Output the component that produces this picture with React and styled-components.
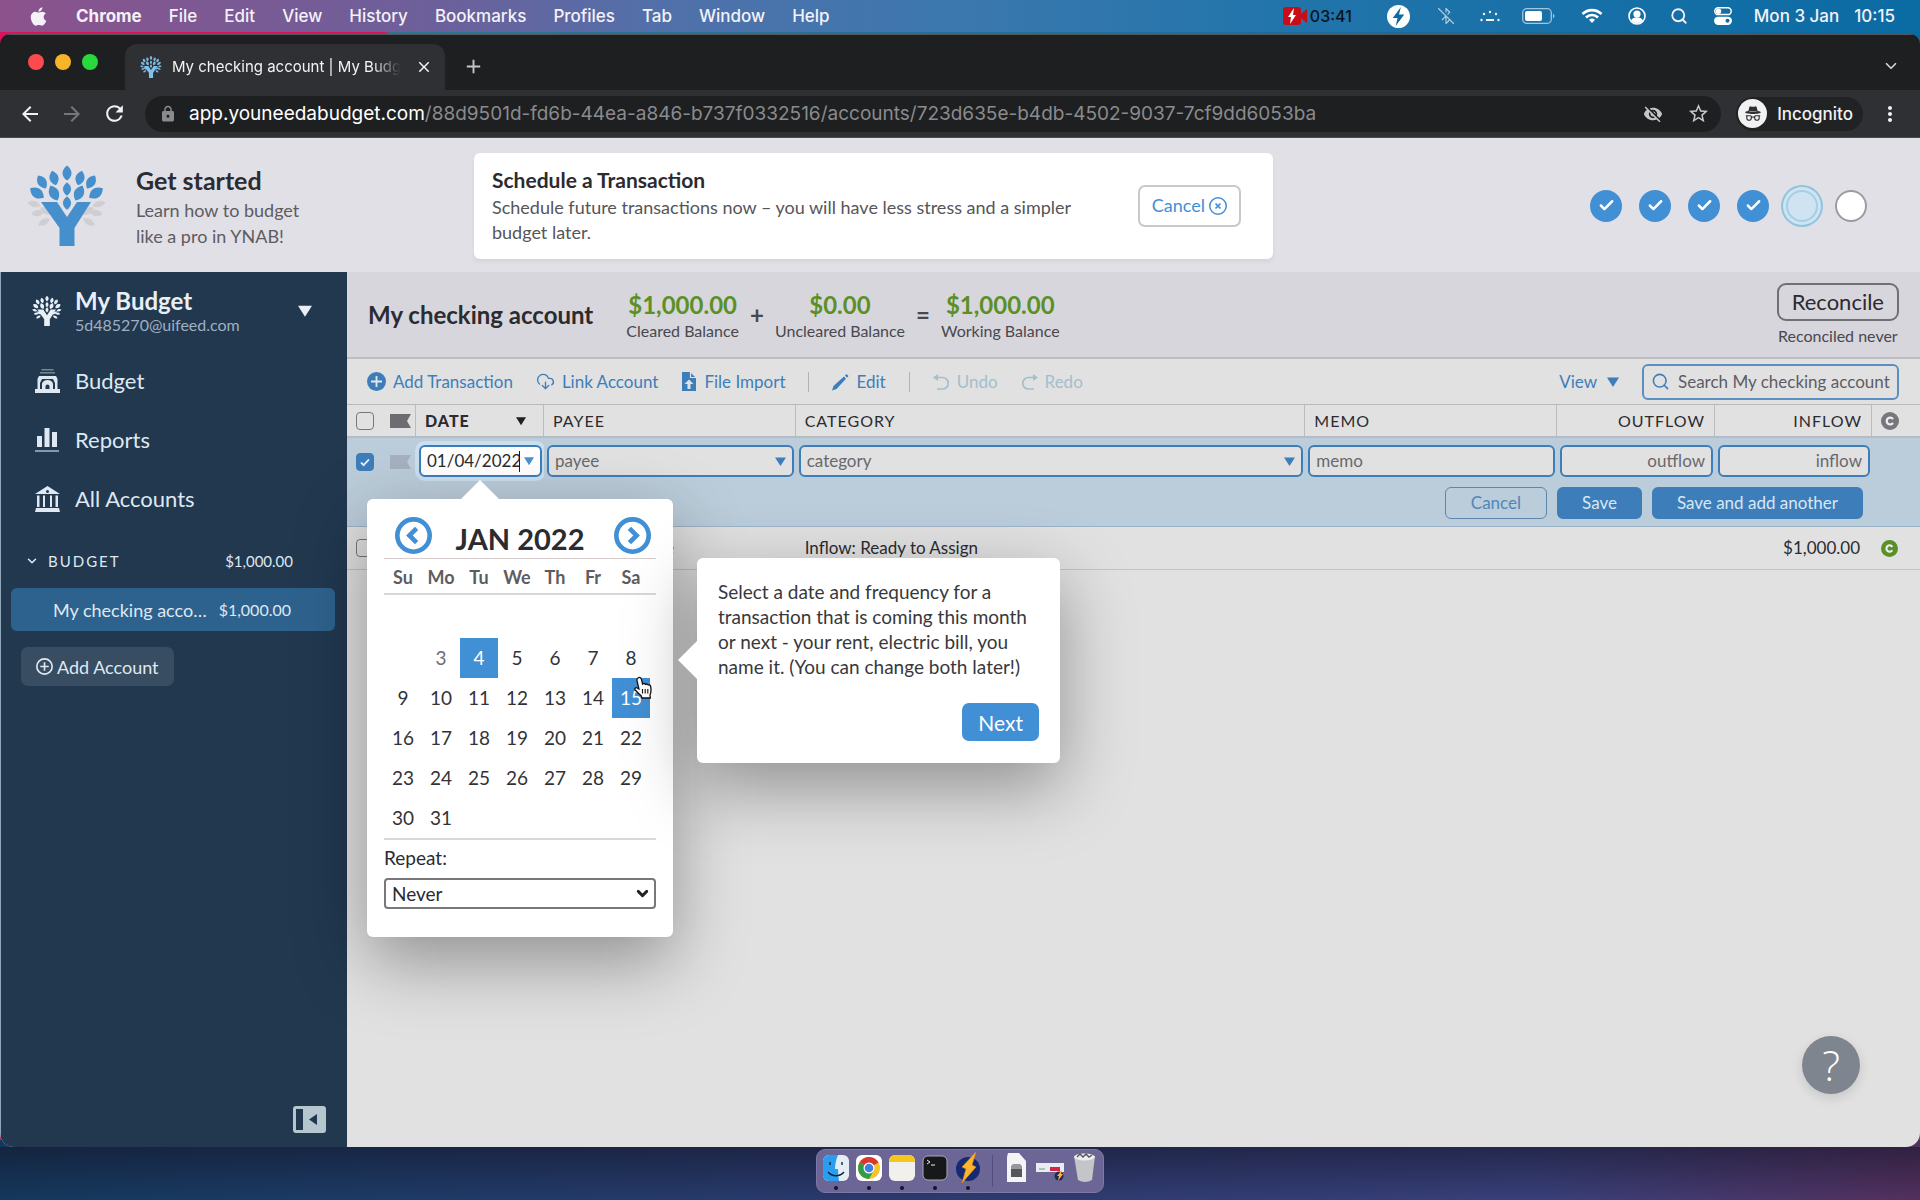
import React from "react";
import styled, { createGlobalStyle, css } from "styled-components";
import { FaApple } from "react-icons/fa";
import { BsIncognito } from "react-icons/bs";
import {
  MdArrowBack,
  MdArrowForward,
  MdRefresh,
  MdLock,
  MdVisibilityOff,
  MdStarBorder,
  MdMoreVert,
  MdClose,
  MdAdd,
} from "react-icons/md";
import { BluetoothOff, ChevronDown, Search, Check, CloudDownload } from "lucide-react";

const blue = "#3d7eba";
const bright = "#418fd4";
const ui = `Inter, "Liberation Sans", sans-serif`;
const lato = `Lato, "Liberation Sans", sans-serif`;

const GlobalStyle = createGlobalStyle`
  *, *::before, *::after { box-sizing: border-box; }
  body { margin: 0; font-family: ${lato}; color: #2b2b30; }
  button, input, select { font: inherit; color: inherit; margin: 0; }
  button { background: none; border: 0; padding: 0; cursor: pointer; }
  a { color: inherit; text-decoration: none; }
  h1, h2, p { margin: 0; }
  svg { display: block; flex: none; }
`;

const Desktop = styled.div`
  min-height: 100vh;
  display: flex;
  flex-direction: column;
  background:
    linear-gradient(rgba(20, 20, 40, 0.55), rgba(20, 20, 40, 0) 100%) bottom / 100% 53px no-repeat,
    linear-gradient(90deg, #14385c 0%, #1c3b66 18%, #2b3a6e 45%, #38407a 80%, #54305e 100%) bottom / 100% 60px no-repeat,
    linear-gradient(90deg, #d8145c 0 385px, #2f7394 390px, #0a6aa2 100%);
`;

/* ---------- system menu bar ---------- */

const MenuBar = styled.header`
  height: 32px;
  display: flex;
  align-items: center;
  justify-content: space-between;
  padding: 0 25px 0 28px;
  font: 500 17px/20px ${ui};
  color: #f4f2f8;
  background: linear-gradient(90deg, #8c528c 0%, #6a619c 24%, #5270aa 34%, #3b78ae 50%, #2275ab 66%, #0b6ba3 100%);
`;

const Menus = styled.nav`
  display: flex;
  align-items: center;
  gap: 27px;
`;

const MenuItem = styled.button`
  font-weight: ${(p) => (p.$strong ? 700 : 500)};
`;

const Tray = styled.div`
  display: flex;
  align-items: center;
`;

const TrayItem = styled.span`
  width: ${(p) => p.$w}px;
  display: flex;
  align-items: center;
  justify-content: center;
`;

const Recording = styled.span`
  display: flex;
  align-items: center;
  gap: 3px;
  width: 93px;
  font-size: 16px;
  color: #0a1420;
`;

const Clock = styled.time`
  display: flex;
  gap: 15px;
  margin-left: 8px;
  white-space: nowrap;
`;

/* ---------- browser frame ---------- */

const Window = styled.div`
  flex: 1;
  display: flex;
  flex-direction: column;
  margin-top: 2px;
  border-radius: 10px 10px 14px 14px;
  overflow: hidden;
  background: #1e1f21;
`;

const TabStrip = styled.div`
  height: 56px;
  display: flex;
  align-items: center;
  padding: 8px 20px 0 28px;
  box-shadow: inset 0 1px #55585b;
  color: #d5d6d8;
`;

const Lights = styled.div`
  display: flex;
  gap: 11px;
  width: 97px;
  padding-bottom: 8px;
`;

const Light = styled.span`
  width: 16px;
  height: 16px;
  border-radius: 50%;
  background: ${(p) => p.$color};
`;

const Tab = styled.div`
  width: 320px;
  height: 46px;
  align-self: flex-end;
  display: flex;
  align-items: center;
  gap: 10px;
  padding: 0 12px 0 15px;
  border-radius: 12px 12px 0 0;
  background: #2f3034;
  color: #f3f3f4;
  font: 400 15px/20px ${ui};
`;

const TabTitle = styled.span`
  flex: 1;
  min-width: 0;
  overflow: hidden;
  white-space: nowrap;
  mask-image: linear-gradient(90deg, #000 86%, transparent 98%);
`;

const Spacer = styled.span`
  flex: 1;
`;

const NewTab = styled.button`
  margin-left: 17px;
  color: #c5c6c8;
`;

const NavBar = styled.div`
  height: 48px;
  display: flex;
  align-items: center;
  gap: 15px;
  padding: 0 18px;
  background: #2f3034;
  border-bottom: 1px solid #4a4b4e;
  color: #f1f1f2;
  font: 400 19px/24px ${ui};
`;

const NavGroup = styled.div`
  display: flex;
  gap: 18px;
  padding-right: 3px;
`;

const NavButton = styled.button`
  color: ${(p) => (p.$dim ? "#76777a" : "#f1f1f2")};
`;

const Omnibox = styled.div`
  flex: 1;
  min-width: 0;
  height: 36px;
  display: flex;
  align-items: center;
  gap: 12px;
  padding: 0 11px 0 14px;
  border-radius: 18px;
  background: #1e1f21;
  color: #8a8b8e;
`;

const Url = styled.span`
  flex: 1;
  min-width: 0;
  overflow: hidden;
  white-space: nowrap;
  b { color: #fff; font-weight: 400; }
`;

const Incognito = styled.span`
  height: 34px;
  display: flex;
  align-items: center;
  gap: 10px;
  padding: 0 10px 0 2px;
  border-radius: 17px;
  background: #212224;
  font: 500 17px/20px ${ui};
`;

const Badge = styled.span`
  width: 29px;
  height: 29px;
  display: grid;
  place-items: center;
  border-radius: 50%;
  background: #f1f1f2;
  color: #2f3034;
`;

/* ---------- onboarding banner ---------- */

const Banner = styled.section`
  display: flex;
  align-items: center;
  height: 134px;
  padding: 1px 53px 0 27px;
  background: #e1e0e6;
`;

const Intro = styled.div`
  display: flex;
  align-items: center;
  gap: 29px;
  width: 447px;
  font-size: 18px;
  line-height: 26px;
  color: #5c5c61;
`;

const Title = styled.h1`
  font-size: ${(p) => p.$size}px;
  line-height: ${(p) => p.$line}px;
  font-weight: 700;
  color: #2b2b30;
  white-space: nowrap;
`;

const Step = styled.div`
  flex: 0 1 799px;
  display: flex;
  justify-content: space-between;
  align-items: center;
  height: 106px;
  padding: 0 32px 0 18px;
  border-radius: 6px;
  background: #fff;
  box-shadow: 0 3px 4px rgba(0, 0, 0, 0.06);
  font-size: 18px;
  line-height: 25px;
  color: #55555a;
`;

const StepText = styled.div`
  max-width: 590px;
  padding-bottom: 2px;
`;

const CancelStep = styled.button`
  display: flex;
  align-items: center;
  gap: 4px;
  height: 42px;
  padding: 0 12px;
  border: 2px solid #c9c9cd;
  border-radius: 7px;
  color: ${bright};
`;

const Progress = styled.ol`
  display: flex;
  align-items: center;
  gap: 17px;
  margin: 0 0 0 auto;
  padding: 0;
  list-style: none;
`;

const Dot = styled.li`
  width: 32px;
  height: 32px;
  display: grid;
  place-items: center;
  border-radius: 50%;
  color: #fff;
  background: ${(p) => (p.$state === "done" ? bright : p.$state === "now" ? "#cfe3f3" : "#fff")};
  ${(p) => p.$state === "todo" && css`border: 2px solid #9b9ba2;`}
  ${(p) =>
    p.$state === "now" &&
    css`
      border: 2px solid #a5cfe2;
      box-shadow: 0 0 0 3px #cfe3f3, 0 0 0 5px #8fc4dd;
    `}
`;

/* ---------- sidebar ---------- */

const Body = styled.div`
  flex: 1;
  display: flex;
  background: #e1e1e1;
`;

const Sidebar = styled.aside`
  width: 347px;
  flex: none;
  position: relative;
  z-index: 2;
  display: flex;
  flex-direction: column;
  background: #21384f;
  border-left: 1px solid #8fa5ba;
  color: #dfe8f1;
`;

const BudgetPicker = styled.button`
  display: flex;
  align-items: center;
  text-align: left;
  padding: 15px 35px 14px 31px;
`;

const PickerText = styled.span`
  flex: 1;
  padding-left: 13px;
  font-size: 16px;
  line-height: 20px;
  color: #9fb0c2;
  strong { display: block; font-size: 24px; line-height: 28px; color: #e8eff6; }
`;

const SideNav = styled.nav`
  display: flex;
  flex-direction: column;
  gap: 1px;
  padding: 3px 0 0 32px;
`;

const SideLink = styled.a`
  display: flex;
  align-items: center;
  gap: 14px;
  height: 58px;
  font-size: 22px;
  line-height: 28px;
`;

const IconSlot = styled.span`
  width: 28px;
  display: grid;
  place-items: center;
`;

const Group = styled.button`
  display: flex;
  align-items: center;
  gap: 9px;
  height: 20px;
  margin: 23px 54px 0 24px;
  font-size: 15px;
  line-height: 20px;
`;

const GroupName = styled.span`
  letter-spacing: 2px;
`;

const AccountLink = styled.a`
  display: flex;
  align-items: center;
  justify-content: space-between;
  height: 43px;
  margin: 17px 12px 16px 10px;
  padding: 0 44px 0 42px;
  border-radius: 6px;
  background: #2e628e;
  font-size: 18px;
  line-height: 24px;
  small { font-size: 16px; }
`;

const AccountName = styled.span`
  width: 160px;
  overflow: hidden;
  white-space: nowrap;
  text-overflow: ellipsis;
`;

const AddAccount = styled.button`
  display: flex;
  align-items: center;
  align-self: flex-start;
  gap: 4px;
  height: 39px;
  margin-left: 20px;
  padding: 0 15px;
  border-radius: 7px;
  background: #384c62;
  font-size: 18px;
`;

const Collapse = styled.button`
  margin: auto 21px 14px auto;
`;

/* ---------- account area ---------- */

const Main = styled.main`
  flex: 1;
  min-width: 0;
  position: relative;
`;

const AccountHeader = styled.header`
  display: flex;
  align-items: center;
  height: 87px;
  padding: 0 21px;
  background: #d7d6dc;
  border-bottom: 2px solid #bdbdc2;
`;

const Balances = styled.div`
  display: flex;
  align-items: center;
  gap: 10px;
  margin-left: 33px;
  font-size: 16px;
  line-height: 20px;
  color: #48484e;
  text-align: center;
`;

const Balance = styled.div`
  white-space: nowrap;
  strong { display: block; font-size: 24px; line-height: 32px; color: #5b9027; }
`;

const Operator = styled.span`
  width: 16px;
  font-size: 24px;
  font-weight: 700;
`;

const ReconcileBox = styled.div`
  margin-left: auto;
  display: flex;
  flex-direction: column;
  align-items: center;
  gap: 4px;
  font-size: 16px;
  line-height: 22px;
  color: #48484e;
`;

const Reconcile = styled.button`
  height: 38px;
  padding: 0 13px;
  border: 2px solid #6f6f76;
  border-radius: 9px;
  font-size: 22px;
  color: #2b2b30;
`;

const Toolbar = styled.div`
  display: flex;
  align-items: center;
  height: 45px;
  padding: 0 21px 0 20px;
  gap: 23px;
  font-size: 17px;
  line-height: 24px;
  color: ${blue};
`;

const Tool = styled.button`
  display: flex;
  align-items: center;
  gap: ${(p) => (p.$menu ? 10 : 7)}px;
  white-space: nowrap;
  ${(p) => p.disabled && css`color: #a3bfcc;`}
`;

const Rule = styled.span`
  width: 1px;
  height: 20px;
  background: #b4b4b8;
`;

const SearchBox = styled.label`
  display: flex;
  align-items: center;
  gap: 8px;
  width: 257px;
  height: 36px;
  padding: 0 7px;
  border: 2px solid #5a8fc0;
  border-radius: 6px;
`;

const SearchInput = styled.input`
  flex: 1;
  min-width: 0;
  padding: 0;
  border: 0;
  outline: 0;
  background: none;
  &::placeholder { color: #5d5d62; opacity: 1; }
`;

const Register = styled.table`
  width: 100%;
  table-layout: fixed;
  border-collapse: separate;
  border-spacing: 0;
  font-size: 17px;
  line-height: 22px;
`;

const Col = styled.col`
  width: ${(p) => p.$w};
`;

const Th = styled.th`
  height: 34px;
  padding: 0 9px;
  border-top: 1px solid #b9b9bd;
  border-right: ${(p) => (p.$open ? "0" : "1px")} solid #bcbcc0;
  border-bottom: 2px solid #b5bcc4;
  font-size: 16px;
  font-weight: ${(p) => (p.$strong ? 900 : 400)};
  text-align: ${(p) => p.$align || "left"};
  letter-spacing: 1px;
  color: #2b2b30;
`;

const HeadInner = styled.div`
  display: flex;
  align-items: center;
  justify-content: space-between;
  padding-right: 8px;
`;

const EditCell = styled.td`
  position: relative;
  height: 45px;
  padding: 7px 2px 6px 3px;
  background: #bbccda;
  vertical-align: top;
`;

const CheckCell = styled.td`
  padding: 2px 9px 0;
  background: #bbccda;
  vertical-align: middle;
`;

const ActionCell = styled.td`
  height: 44px;
  padding: 0;
  background: #bbccda;
  border-bottom: 1px solid #9cb4c8;
`;

const Actions = styled.div`
  display: flex;
  justify-content: flex-end;
  align-items: flex-start;
  gap: 10px;
  padding: 0 57px 3px 0;
`;

const Action = styled.button`
  height: 32px;
  padding: 0 23px;
  border-radius: 6px;
  border: 2px solid ${blue};
  background: ${blue};
  color: #d9e7f4;
  ${(p) =>
    p.$ghost &&
    css`
      padding: 0 25px;
      border: 1px solid #5b86ae;
      background: none;
      color: #5087bb;
    `}
`;

const Cell = styled.td`
  height: 43px;
  padding: 0 12px 0 9px;
  border-bottom: 1px solid #c3c3c6;
  text-align: ${(p) => p.$align || "left"};
`;

const Tick = styled.input`
  appearance: none;
  display: block;
  width: 18px;
  height: 18px;
  border: 1px solid #77777c;
  border-radius: 4px;
  &:checked {
    border-color: ${blue};
    background: ${blue} url("data:image/svg+xml,%3Csvg xmlns='http://www.w3.org/2000/svg' viewBox='0 0 16 16'%3E%3Cpath d='M4 8.5l2.6 2.6L12 5.4' fill='none' stroke='%23e3eef8' stroke-width='1.8'/%3E%3C/svg%3E") center / 16px;
  }
`;

const Field = styled.label`
  display: flex;
  align-items: center;
  height: 32px;
  padding: 0 6px;
  border: 2px solid ${blue};
  border-radius: 6px;
  background: ${(p) => (p.$active ? "#fff" : "#e1e1e1")};
  box-shadow: ${(p) => (p.$active ? "0 0 0 4px #cadff0" : "none")};
`;

const FieldInput = styled.input`
  flex: 1;
  min-width: 0;
  width: 100%;
  padding: 0;
  border: 0;
  outline: 0;
  background: none;
  text-align: ${(p) => p.$align || "left"};
  &::placeholder { color: #68686d; opacity: 1; }
`;

const Caret = styled.span`
  width: 1px;
  height: 21px;
  margin-right: 4px;
  background: #1b1b1f;
`;

/* ---------- date picker ---------- */

const popShadow = "0 24px 70px rgba(0, 0, 0, 0.36)";

const Picker = styled.div`
  position: absolute;
  z-index: 3;
  top: 61px;
  left: -49px;
  width: 306px;
  padding: 18px 17px 28px;
  border-radius: 6px;
  background: #fff;
  box-shadow: ${popShadow};
  font-size: 19px;
  &::before {
    content: "";
    position: absolute;
    left: 94px;
    top: -19px;
    border: 19px solid transparent;
    border-top: 0;
    border-bottom-color: #fff;
  }
`;

const PickerHead = styled.div`
  display: flex;
  align-items: flex-end;
  justify-content: space-between;
  height: 42px;
  padding: 0 5px 4px 11px;
  border-bottom: 1px solid #d6cccc;
`;

const MonthName = styled.span`
  padding-right: 6px;
  font-size: 29px;
  line-height: 30px;
  font-weight: 700;
`;

const Weekdays = styled.div`
  display: grid;
  grid-template-columns: repeat(7, 38px);
  height: 36px;
  padding-top: 2px;
  align-items: center;
  justify-items: center;
  border-bottom: 2px solid #d8d8d8;
  font-size: 18px;
  font-weight: 700;
  color: #5d5d61;
`;

const Days = styled.div`
  display: grid;
  grid-template-columns: repeat(7, 38px);
  grid-auto-rows: 40px;
  padding: 3px 0 0;
  border-bottom: 2px solid #d8d8d8;
`;

const Day = styled.button`
  position: relative;
  color: ${(p) => (p.$picked ? "#fff" : p.$past ? "#6d6d71" : "#333337")};
  background: ${(p) => (p.$picked ? bright : "none")};
`;

const Hand = styled.svg`
  position: absolute;
  z-index: 1;
  top: -2px;
  left: 22px;
`;

const RepeatLabel = styled.label`
  display: block;
  padding-top: 6px;
  line-height: 24px;
`;

const RepeatBox = styled.span`
  display: grid;
  align-items: center;
  margin-top: 8px;
  > * { grid-area: 1 / 1; }
  > svg { justify-self: end; margin-right: 5px; pointer-events: none; }
`;

const RepeatSelect = styled.select`
  appearance: none;
  width: 100%;
  height: 31px;
  padding: 0 6px;
  border: 2px solid #77777c;
  border-radius: 4px;
  background: #fff;
`;

const Tip = styled.div`
  position: absolute;
  z-index: 4;
  top: 59px;
  left: 330px;
  width: 363px;
  padding: 21px 21px 22px;
  border-radius: 6px;
  background: #fff;
  box-shadow: ${popShadow};
  line-height: 25px;
  color: #38383c;
  &::before {
    content: "";
    position: absolute;
    left: -19px;
    top: 83px;
    border: 19px solid transparent;
    border-left: 0;
    border-right-color: #fff;
  }
`;

const Next = styled.button`
  display: block;
  height: 38px;
  margin: 24px 0 0 auto;
  padding: 0 16px;
  border-radius: 7px;
  background: ${bright};
  color: #fff;
  font-size: 21px;
`;

const Help = styled.button`
  position: absolute;
  right: 60px;
  bottom: 53px;
  width: 58px;
  height: 58px;
  border-radius: 50%;
  background: #7f858f;
  color: #fff;
  font: 400 42px/58px "Open Sans", ${lato};
  font-weight: 300;
  box-shadow: 0 4px 12px rgba(0, 0, 0, 0.12);
`;

/* ---------- dock ---------- */

const DockArea = styled.footer`
  height: 53px;
  display: flex;
  justify-content: center;
  align-items: flex-start;
  padding-top: 2px;
`;

const Dock = styled.div`
  height: 44px;
  display: flex;
  align-items: flex-start;
  gap: 7px;
  padding: 5px 6px;
  border-radius: 9px;
  background: #6b6695;
  border: 1px solid #7d78a4;
`;

const DockItem = styled.button`
  display: flex;
  flex-direction: column;
  align-items: center;
  gap: 5px;
  &::after {
    content: "";
    width: 4px;
    height: 4px;
    border-radius: 50%;
    background: ${(p) => (p.$running ? "#14142a" : "transparent")};
  }
`;

const DockRule = styled.span`
  width: 1px;
  height: 32px;
  margin: 0 3px 0 4px;
  background: #524e7c;
`;

/* ---------- drawings ---------- */

const leaves = [
  [40, 8, 0, 1], [27, 13, -15, 1], [53, 13, 15, 1], [15, 17, -32, 1], [64, 17, 32, 1],
  [10, 28, -55, 1.1], [69, 28, 55, 1.1], [27, 28, -25, 1.1], [52, 28, 25, 1.1], [40, 24, 0, 0.9], [40, 38, 0, 0.9],
];
const lowLeaves = [
  [7, 39, -75], [72, 39, 75], [11, 48, -100], [69, 48, 100], [19, 46, -60], [61, 46, 60], [17, 57, -120], [62, 57, 120],
];

function Tree({ width, height, color, low, trunk }) {
  const leaf = "M0-8C5-3 5 3 0 8C-5 3-5-3 0-8Z";
  return (
    <svg width={width} height={height} viewBox="0 0 80 82" aria-hidden="true">
      {leaves.map(([x, y, r, s]) => (
        <path key={`${x}-${y}`} d={leaf} fill={color} transform={`translate(${x} ${y}) rotate(${r}) scale(${s * 1.2} ${s * 0.95})`} />
      ))}
      {lowLeaves.map(([x, y, r]) => (
        <path key={`${x}-${y}`} d={leaf} fill={low} transform={`translate(${x} ${y}) rotate(${r}) scale(0.85)`} />
      ))}
      <path d="M14 37h16l10 15 10-15h14L47.500 63v18h-15V63Z" fill={trunk} />
    </svg>
  );
}

const Triangle = ({ size = 12, color = blue }) => (
  <svg width={size} height={size} viewBox="0 0 12 12" aria-hidden="true">
    <path d="M0 1.500h12L6 11Z" fill={color} />
  </svg>
);

const Flag = ({ color }) => (
  <svg width="21" height="14" viewBox="0 0 21 14" aria-hidden="true">
    <path d="M0 0h21l-4 7 4 7H0Z" fill={color} />
  </svg>
);

const Cleared = ({ size, color }) => (
  <svg width={size} height={size} viewBox="0 0 18 18" role="img" aria-label="Cleared">
    <circle cx="9" cy="9" r="9" fill={color} />
    <path d="M12 7.200A3.400 3.400 0 1 0 12 10.800" fill="none" stroke="#e9eef2" strokeWidth="2.300" />
  </svg>
);

const BudgetIcon = () => (
  <svg width="25" height="25" viewBox="0 0 25 25" fill="currentColor">
    <path d="M6.500 0h12v1.500h-12zM5 3h15v1.600H5z" opacity=".45" />
    <path d="M4 7h17l1.500 3v10h-20V10Z" />
    <path d="M5 20v-6l2-4h11l2 4v6Z" fill="#21384f" />
    <path d="M7 20v-5a5.500 4 0 0 1 11 0v5Z" />
    <path d="M10.500 20v-2.500a2 2 0 0 1 4 0V20Z" fill="#21384f" />
    <path d="M0 20h25v4H0Z" />
  </svg>
);

const ReportsIcon = () => (
  <svg width="25" height="26" viewBox="0 0 25 26" fill="currentColor">
    <path d="M2 9h5v11H2zM9.500 1h5v19h-5zM17 5h5v15h-5z" />
    <path d="M0 23h24v2H0Z" opacity=".55" />
  </svg>
);

const BankIcon = () => (
  <svg width="25" height="26" viewBox="0 0 25 26" fill="currentColor">
    <path d="M12.500 0 25 8H0Z" />
    <circle cx="12.500" cy="5.500" r="1.500" fill="#21384f" />
    <path d="M2 9.500h2.500V21H2zM8 9.500h2V21H8zM15 9.500h2V21h-2zM20.500 9.500H23V21h-2.500zM1 22h23l1 4H0Z" />
  </svg>
);

const PlusDisc = () => (
  <svg width="19" height="19" viewBox="0 0 19 19">
    <circle cx="9.500" cy="9.500" r="9.500" fill={blue} />
    <path d="M9.500 4v11M4 9.500h11" stroke="#e1e8ee" strokeWidth="1.800" />
  </svg>
);

const FileIcon = () => (
  <svg width="16" height="20" viewBox="0 0 16 20">
    <path d="M1 0h8l6 6v13H1Z" fill={blue} />
    <path d="M9.500 0v5.500H15" fill="none" stroke="#e1e1e1" strokeWidth="1.200" />
    <path d="M8 7.500 12.500 12H9.500v5h-3v-5h-3Z" fill="#e1e1e1" />
  </svg>
);

const PencilIcon = () => (
  <svg width="17" height="18" viewBox="0 0 17 18" fill={blue}>
    <path d="M12 3.500 14 5.800 4.500 16 0 17.500 1.500 13Z" />
    <path d="M13 2.500 14.500 1l2 2L15 4.700Z" />
  </svg>
);

const TurnIcon = ({ flip }) => (
  <svg width="17" height="18" viewBox="0 0 17 18" fill="none" stroke="currentColor" strokeWidth="1.700">
    <g transform={flip ? "translate(17 0) scale(-1 1)" : undefined}>
      <path d="M2 4.500h7.500a5.500 5.500 0 0 1 0 11.500H4" />
      <path d="M0 4.500 5 1v7Z" fill="currentColor" stroke="none" />
    </g>
  </svg>
);

const RingIcon = ({ size, stroke, d, color, w }) => (
  <svg width={size} height={size} viewBox="0 0 36 36" fill="none" stroke={color} strokeWidth={stroke}>
    <circle cx="18" cy="18" r={18 - stroke / 2} />
    <path d={d} strokeWidth={w || stroke} />
  </svg>
);

const HandPointer = () => (
  <Hand width="18" height="24" viewBox="0 0 18 24" aria-hidden="true">
    <path
      d="M4 2c1.500-1.200 3-.4 3.400 1.200L8.600 8c1-.9 2.300-.6 2.900.4 1-.7 2.200-.4 2.700.6 1.300-.4 2.300.3 2.500 1.600.5 3 .8 5.400-.7 8.400l.3 3H8l-.8-2.200C5 18 3.500 16.600 1.200 14c-1-1.400.4-3 2-2l1.700 1L3 4.600C2.700 3.500 3 2.600 4 2Z"
      fill="#fff"
      stroke="#111"
      strokeWidth="1.300"
    />
    <path d="M8.500 13v4.500M11.200 13v4.500M13.800 13v4.500" stroke="#111" strokeWidth="1.100" />
  </Hand>
);

const BoltCircle = () => (
  <svg width="23" height="23" viewBox="0 0 24 24">
    <circle cx="12" cy="12" r="12" fill="#fff" />
    <path d="M14.500 2 6 13.500h5L9 22l9-12h-5.500Z" fill="#0f6aa0" />
  </svg>
);

const DockIcons = {
  Finder: (
    <svg width="26" height="26" viewBox="0 0 26 26">
      <rect width="26" height="26" rx="6" fill="#e4edf5" />
      <path d="M6 0h9c-2 5-3 9-3 14h3c0 4 .3 8 1 12H6a6 6 0 0 1-6-6V6a6 6 0 0 1 6-6Z" fill="#2a9df0" />
      <path d="M7 7v3M19 7v3M5 17c4 5 12 5 16 0" stroke="#123" strokeWidth="1.400" fill="none" />
    </svg>
  ),
  Chrome: (
    <svg width="26" height="26" viewBox="0 0 26 26">
      <rect width="26" height="26" rx="6" fill="#fff" />
      <circle cx="13" cy="13" r="11" fill="#f7c52b" />
      <path d="M13 13 3.500 7.500A11 11 0 0 1 22.500 7.500Z" fill="#d8392e" />
      <path d="M13 13 3.500 7.500A11 11 0 0 0 13 24l4.500-8Z" fill="#2e9c4c" />
      <circle cx="13" cy="13" r="5.500" fill="#fff" />
      <circle cx="13" cy="13" r="4.300" fill="#3f7fe8" />
    </svg>
  ),
  Notes: (
    <svg width="26" height="26" viewBox="0 0 26 26">
      <rect width="26" height="26" rx="6" fill="#f1f0ed" />
      <path d="M6 0h14a6 6 0 0 1 6 6v1H0V6a6 6 0 0 1 6-6Z" fill="#f5c61c" />
    </svg>
  ),
  Terminal: (
    <svg width="26" height="26" viewBox="0 0 26 26">
      <rect x="1" y="1" width="24" height="24" rx="5" fill="#17181a" stroke="#a7a7b4" />
      <path d="m5 5 3 2-3 2M9 10h4" stroke="#eee" fill="none" />
    </svg>
  ),
  Recorder: (
    <svg width="26" height="26" viewBox="0 0 26 26" overflow="visible">
      <circle cx="13" cy="14" r="12" fill="#152a73" />
      <path d="M21-3 7 12l4 2-4 14 14-16-4-2Z" fill="#fdb62b" stroke="#e58a12" strokeWidth=".6" />
    </svg>
  ),
  Document: (
    <svg width="26" height="26" viewBox="0 0 26 26" overflow="visible">
      <path d="M5-2h11l7 8v21H4V2Z" fill="#f4f4f6" />
      <path d="M8 11h11v11H8Z" fill="#55565b" />
      <path d="M8 14v-3l2-2h7l2 2v3Z" fill="#97989c" />
    </svg>
  ),
  Preview: (
    <svg width="28" height="26" viewBox="0 0 28 26">
      <rect y="8" width="28" height="9" fill="#eceaf2" />
      <rect x="14" y="12" width="10" height="4" fill="#d22743" />
      <rect x="3" y="13" width="6" height="2" fill="#a8c7b0" />
      <circle cx="23" cy="21" r="4.500" fill="#20265e" />
      <path d="m26 15-5 6h2l-1 5 5-7h-2Z" fill="#fdb62b" />
    </svg>
  ),
  Trash: (
    <svg width="26" height="26" viewBox="0 0 26 26" overflow="visible">
      <path d="M3 1h21l-3 24q-7 4-14 0Z" fill="#c4c5c9" />
      <ellipse cx="13.500" cy="2" rx="10.500" ry="3.500" fill="#ececee" />
      <path d="m6 2 3-3 3 3 3-3 3 3 3-2" stroke="#55565c" fill="none" strokeWidth="1.400" />
    </svg>
  ),
};

const menus = ["File", "Edit", "View", "History", "Bookmarks", "Profiles", "Tab", "Window", "Help"];
const weekdays = ["Su", "Mo", "Tu", "We", "Th", "Fr", "Sa"];
const days = Array.from({ length: 29 }, (_, i) => i + 3);

function DatePicker() {
  return (
    <Picker role="dialog" aria-label="Choose a date">
      <PickerHead>
        <button type="button" aria-label="Previous month">
          <RingIcon size={37} stroke={4.5} color={bright} d="m21 11-7 7 7 7" />
        </button>
        <MonthName>JAN 2022</MonthName>
        <button type="button" aria-label="Next month">
          <RingIcon size={37} stroke={4.5} color={bright} d="m15 11 7 7-7 7" />
        </button>
      </PickerHead>
      <Weekdays>
        {weekdays.map((d) => (
          <span key={d}>{d}</span>
        ))}
      </Weekdays>
      <Days>
        {Array.from({ length: 8 }, (_, i) => (
          <span key={`blank${i}`} />
        ))}
        {days.map((d) => (
          <Day key={d} type="button" $picked={d === 4 || d === 15} $past={d === 3}>
            {d}
            {d === 15 && <HandPointer />}
          </Day>
        ))}
      </Days>
      <RepeatLabel>
        Repeat:
        <RepeatBox>
          <RepeatSelect defaultValue="Never">
            <option>Never</option>
          </RepeatSelect>
          <ChevronDown size={17} strokeWidth={4} color="#222" />
        </RepeatBox>
      </RepeatLabel>
      <Tip>
        <p>
          Select a date and frequency for a transaction that is coming this month or next - your rent, electric bill,
          you name it. (You can change both later!)
        </p>
        <Next type="button">Next</Next>
      </Tip>
    </Picker>
  );
}

export default function App() {
  return (
    <Desktop>
      <GlobalStyle />
      <MenuBar>
        <Menus>
          <FaApple size={21} />
          <MenuItem $strong>Chrome</MenuItem>
          {menus.map((m) => (
            <MenuItem key={m}>{m}</MenuItem>
          ))}
        </Menus>
        <Tray>
          <Recording>
            <svg width="24" height="18" viewBox="0 0 24 18">
              <rect width="18" height="18" rx="3" fill="#c90d18" />
              <path d="m18 7 6-5v14l-6-5Z" fill="#c90d18" />
              <path d="M11 1 5 10h3l-1 7 6-9h-3Z" fill="#fff" />
            </svg>
            03:41
          </Recording>
          <TrayItem $w={46}><BoltCircle /></TrayItem>
          <TrayItem $w={48}><BluetoothOff size={18} strokeWidth={1.5} opacity={0.7} /></TrayItem>
          <TrayItem $w={40}>
            <svg width="20" height="12" viewBox="0 0 20 12" fill="currentColor">
              <circle cx="10" cy="2" r="1.200" /><circle cx="4" cy="4" r="1.200" /><circle cx="16" cy="4" r="1.200" />
              <circle cx="1.500" cy="10" r="1.200" /><circle cx="18.500" cy="10" r="1.200" /><path d="M6 9h8v2H6Z" />
            </svg>
          </TrayItem>
          <TrayItem $w={58}>
            <svg width="34" height="16" viewBox="0 0 34 16">
              <rect x=".7" y=".7" width="28.600" height="14.600" rx="4" fill="none" stroke="#fff" opacity=".6" strokeWidth="1.300" />
              <rect x="3" y="3" width="17" height="10" rx="2" fill="#fff" />
              <path d="M31 5.500q3 2.500 0 5Z" fill="#fff" opacity=".6" />
            </svg>
          </TrayItem>
          <TrayItem $w={48}>
            <svg width="22" height="16" viewBox="0 0 22 16" fill="none" stroke="#fff" strokeWidth="2.600">
              <path d="M1.500 6a13.500 13.500 0 0 1 19 0M5 9.500a8.500 8.500 0 0 1 12 0" />
              <path d="m11 15 3-3.200a4.500 4.500 0 0 0-6 0Z" fill="#fff" stroke="none" />
            </svg>
          </TrayItem>
          <TrayItem $w={42}>
            <svg width="18" height="18" viewBox="0 0 18 18" fill="none" stroke="#fff" strokeWidth="1.600">
              <circle cx="9" cy="9" r="8" />
              <circle cx="9" cy="7" r="2.800" fill="#fff" />
              <path d="M4 13.500a5.500 4 0 0 1 10 0Q9 17 4 13.500Z" fill="#fff" />
            </svg>
          </TrayItem>
          <TrayItem $w={42}><Search size={18} strokeWidth={2.4} /></TrayItem>
          <TrayItem $w={46}>
            <svg width="18" height="18" viewBox="0 0 18 18" fill="none" stroke="#fff" strokeWidth="1.500">
              <rect x=".8" y=".8" width="16.400" height="6.800" rx="3.400" />
              <circle cx="4.500" cy="4.200" r="2" fill="#fff" />
              <rect x=".8" y="10.400" width="16.400" height="6.800" rx="3.400" fill="#fff" />
              <circle cx="13.500" cy="13.800" r="2" fill="#0b6ba3" stroke="none" />
            </svg>
          </TrayItem>
          <Clock><span>Mon 3 Jan</span><span>10:15</span></Clock>
        </Tray>
      </MenuBar>

      <Window>
        <TabStrip>
          <Lights>
            <Light $color="#fb4b4f" />
            <Light $color="#f8b429" />
            <Light $color="#28d83c" />
          </Lights>
          <Tab>
            <Tree width={22} height={24} color="#7fb8de" low="#7fb8de" trunk="#7fc1ea" />
            <TabTitle>My checking account | My Budget</TabTitle>
            <button aria-label="Close tab"><MdClose size={18} /></button>
          </Tab>
          <NewTab aria-label="New tab"><MdAdd size={23} /></NewTab>
          <Spacer />
          <button aria-label="Search tabs"><ChevronDown size={18} strokeWidth={2.2} /></button>
        </TabStrip>
        <NavBar>
          <NavGroup>
            <NavButton aria-label="Back"><MdArrowBack size={24} /></NavButton>
            <NavButton $dim aria-label="Forward"><MdArrowForward size={24} /></NavButton>
            <NavButton aria-label="Reload"><MdRefresh size={25} /></NavButton>
          </NavGroup>
          <Omnibox>
            <MdLock size={18} />
            <Url>
              <b>app.youneedabudget.com</b>/88d9501d-fd6b-44ea-a846-b737f0332516/accounts/723d635e-b4db-4502-9037-7cf9dd6053ba
            </Url>
            <MdVisibilityOff size={20} color="#c5c6c8" />
            <span />
            <MdStarBorder size={23} color="#c5c6c8" />
          </Omnibox>
          <Incognito>
            <Badge><BsIncognito size={18} /></Badge>
            Incognito
          </Incognito>
          <NavButton aria-label="Menu"><MdMoreVert size={24} /></NavButton>
        </NavBar>

        <Banner>
          <Intro>
            <Tree width={80} height={82} color="#4590cc" low="#cfcfd3" trunk="#4590cc" />
            <div>
              <Title $size={25} $line={34}>Get started</Title>
              Learn how to budget
              <br />
              like a pro in YNAB!
            </div>
          </Intro>
          <Step>
            <StepText>
              <Title as="h2" $size={21} $line={30}>Schedule a Transaction</Title>
              Schedule future transactions now – you will have less stress and a simpler budget later.
            </StepText>
            <CancelStep type="button">
              Cancel
              <RingIcon size={18} stroke={3} color={bright} d="m13 13 10 10M23 13 13 23" w={3.5} />
            </CancelStep>
          </Step>
          <Progress aria-label="Progress">
            {["done", "done", "done", "done", "now", "todo"].map((s, i) => (
              <Dot key={i} $state={s}>{s === "done" && <Check size={17} strokeWidth={3.5} />}</Dot>
            ))}
          </Progress>
        </Banner>

        <Body>
          <Sidebar>
            <BudgetPicker type="button">
              <Tree width={30} height={32} color="#e8eff6" low="#e8eff6" trunk="#e8eff6" />
              <PickerText>
                <strong>My Budget</strong>
                5d485270@uifeed.com
              </PickerText>
              <Triangle size={14} color="#e8eff6" />
            </BudgetPicker>
            <SideNav>
              <SideLink href="#budget"><IconSlot><BudgetIcon /></IconSlot>Budget</SideLink>
              <SideLink href="#reports"><IconSlot><ReportsIcon /></IconSlot>Reports</SideLink>
              <SideLink href="#accounts"><IconSlot><BankIcon /></IconSlot>All Accounts</SideLink>
            </SideNav>
            <Group type="button">
              <ChevronDown size={14} strokeWidth={2.6} />
              <GroupName>BUDGET</GroupName>
              <Spacer />
              $1,000.00
            </Group>
            <AccountLink href="#checking">
              <AccountName>My checking account</AccountName>
              <small>$1,000.00</small>
            </AccountLink>
            <AddAccount type="button">
              <RingIcon size={17} stroke={3.5} color="#dfe8f1" d="M18 9v18M9 18h18" />
              Add Account
            </AddAccount>
            <Collapse type="button" aria-label="Collapse sidebar">
              <svg width="33" height="27" viewBox="0 0 33 27">
                <rect width="33" height="27" rx="3" fill="#b5c6cf" />
                <path d="M3 3h7v21H3zM24 8v11l-8-5.500Z" fill="#21384f" />
              </svg>
            </Collapse>
          </Sidebar>

          <Main>
            <AccountHeader>
              <Title $size={24} $line={32}>My checking account</Title>
              <Balances>
                <Balance><strong>$1,000.00</strong>Cleared Balance</Balance>
                <Operator>+</Operator>
                <Balance><strong>$0.00</strong>Uncleared Balance</Balance>
                <Operator>=</Operator>
                <Balance><strong>$1,000.00</strong>Working Balance</Balance>
              </Balances>
              <ReconcileBox>
                <Reconcile type="button">Reconcile</Reconcile>
                Reconciled never
              </ReconcileBox>
            </AccountHeader>
            <Toolbar>
              <Tool type="button"><PlusDisc />Add Transaction</Tool>
              <Tool type="button"><CloudDownload size={19} strokeWidth={1.7} />Link Account</Tool>
              <Tool type="button"><FileIcon />File Import</Tool>
              <Rule />
              <Tool type="button"><PencilIcon />Edit</Tool>
              <Rule />
              <Tool type="button" disabled><TurnIcon />Undo</Tool>
              <Tool type="button" disabled><TurnIcon flip />Redo</Tool>
              <Spacer />
              <Tool type="button" $menu>View <Triangle /></Tool>
              <SearchBox>
                <Search size={19} />
                <SearchInput type="text" aria-label="Search" placeholder="Search My checking account" />
              </SearchBox>
            </Toolbar>
            <Register>
              <colgroup>
                <Col $w="34px" /><Col $w="35px" /><Col $w="128px" /><Col $w="16%" /><Col $w="auto" />
                <Col $w="16%" /><Col $w="158px" /><Col $w="157px" /><Col $w="48px" />
              </colgroup>
              <thead>
                <tr>
                  <Th $open><Tick type="checkbox" aria-label="Select all" /></Th>
                  <Th aria-label="Flag"><Flag color="#6d6d71" /></Th>
                  <Th $strong><HeadInner>DATE<Triangle size={10} color="#1f1f24" /></HeadInner></Th>
                  <Th>PAYEE</Th>
                  <Th>CATEGORY</Th>
                  <Th>MEMO</Th>
                  <Th $align="right">OUTFLOW</Th>
                  <Th $align="right">INFLOW</Th>
                  <Th $open><Cleared size={18} color="#77777b" /></Th>
                </tr>
              </thead>
              <tbody>
                <tr>
                  <CheckCell><Tick type="checkbox" defaultChecked aria-label="Select transaction" /></CheckCell>
                  <CheckCell><Flag color="#a5b1be" /></CheckCell>
                  <EditCell>
                    <Field $active>
                      <FieldInput aria-label="Date" defaultValue="01/04/2022" />
                      <Caret />
                      <Triangle size={10} color="#4a92d2" />
                    </Field>
                    <DatePicker />
                  </EditCell>
                  <EditCell><Field><FieldInput aria-label="Payee" placeholder="payee" /><Triangle size={11} /></Field></EditCell>
                  <EditCell><Field><FieldInput aria-label="Category" placeholder="category" /><Triangle size={11} /></Field></EditCell>
                  <EditCell><Field><FieldInput aria-label="Memo" placeholder="memo" /></Field></EditCell>
                  <EditCell><Field><FieldInput $align="right" aria-label="Outflow" placeholder="outflow" /></Field></EditCell>
                  <EditCell><Field><FieldInput $align="right" aria-label="Inflow" placeholder="inflow" /></Field></EditCell>
                  <EditCell />
                </tr>
                <tr>
                  <ActionCell colSpan={9}>
                    <Actions>
                      <Action type="button" $ghost>Cancel</Action>
                      <Action type="button">Save</Action>
                      <Action type="button">Save and add another</Action>
                    </Actions>
                  </ActionCell>
                </tr>
                <tr>
                  <Cell><Tick type="checkbox" aria-label="Select starting balance" /></Cell>
                  <Cell />
                  <Cell />
                  <Cell>Starting Balance</Cell>
                  <Cell>Inflow: Ready to Assign</Cell>
                  <Cell />
                  <Cell />
                  <Cell $align="right">$1,000.00</Cell>
                  <Cell><Cleared size={17} color="#5b9027" /></Cell>
                </tr>
              </tbody>
            </Register>
            <Help type="button" aria-label="Help">?</Help>
          </Main>
        </Body>
      </Window>

      <DockArea>
        <Dock>
          {["Finder", "Chrome", "Notes", "Terminal", "Recorder"].map((n) => (
            <DockItem key={n} $running aria-label={n}>{DockIcons[n]}</DockItem>
          ))}
          <DockRule />
          {["Document", "Preview", "Trash"].map((n) => (
            <DockItem key={n} aria-label={n}>{DockIcons[n]}</DockItem>
          ))}
        </Dock>
      </DockArea>
    </Desktop>
  );
}
